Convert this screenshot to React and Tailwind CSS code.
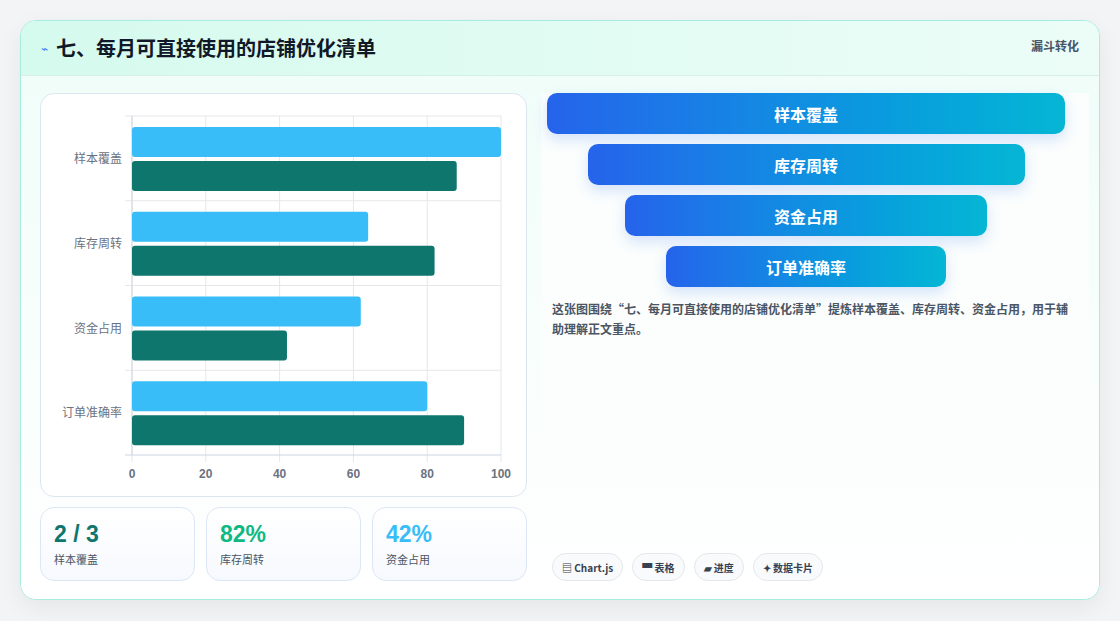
import React from "react";

const cats = [["样本覆盖",100,88],["库存周转",64,82],["资金占用",62,42],["订单准确率",80,90]];
const X0=131-40, W=369, Y0=115-93, BAND=84.75;

function Chart(){
  const xs=[0,20,40,60,80,100];
  return (
    <svg width="486" height="403" className="block" style={{fontFamily:"'Liberation Sans','Noto Sans CJK SC',sans-serif"}}>
      {xs.map(v=>{const x=X0+v/100*W;return <line key={v} x1={x} x2={x} y1={Y0} y2={Y0+339+7} stroke="#e5e7eb"/>})}
      {[0,1,2,3,4].map(i=><line key={i} x1={X0-7} x2={X0+W} y1={Y0+i*BAND} y2={Y0+i*BAND} stroke={i===4?"#cbd5e1":"#e5e7eb"}/>)}
      <line x1={X0} x2={X0} y1={Y0} y2={Y0+339} stroke="#d1d5db"/>
      {cats.map(([n,a,b],i)=>{const y=Y0+i*BAND;return <g key={n}>
        <rect x={X0} y={y+11} width={a/100*W} height={30} rx={3} fill="#38bdf8"/>
        <rect x={X0} y={y+45} width={b/100*W} height={30} rx={3} fill="#0f766e"/>
        <text x={X0-10} y={y+47} textAnchor="end" fontSize="12" fill="#6b7280">{n}</text>
      </g>})}
      {xs.map(v=><text key={v} x={X0+v/100*W} y={Y0+339+23} textAnchor="middle" fontSize="12" fontWeight="bold" fill="#6b7280">{v}</text>)}
    </svg>
  );
}

const funnel=[["样本覆盖",518],["库存周转",437],["资金占用",362],["订单准确率",280]];

export default function App(){
  return (
    <div className="w-[1120px] h-[621px] bg-[#f3f4f6] pt-[20px] pl-[20px]" style={{fontFamily:"'Noto Sans CJK SC','Noto Sans',sans-serif"}}>
      <div className="w-[1080px] h-[580px] rounded-[16px] border border-[#a7ece0] bg-white overflow-hidden shadow-[0_8px_24px_rgba(0,0,0,0.06)] flex flex-col">
        <div className="h-[55px] shrink-0 flex items-center justify-between px-[20px] bg-gradient-to-r from-[#d5faee] to-[#ecfdf7] border-b border-[#d7efe9]">
          <div className="flex items-center gap-[8px]">
            <span className="text-[#3b82f6] text-[12px]">⌁</span>
            <span className="text-[20px] font-bold text-[#111827]">七、每月可直接使用的店铺优化清单</span>
          </div>
          <span className="text-[12px] font-bold text-[#475569] self-start mt-[16px] mr-[0px]">漏斗转化</span>
        </div>
        <div className="flex-1 flex gap-[14px] pl-[19px] pr-[10px] pt-[17px] pb-[18px] bg-gradient-to-b from-[#f0fdf9] to-white">
          <div className="w-[487px] flex flex-col gap-[10px]">
            <div className="h-[404px] rounded-[14px] border border-[#dbe7f0] bg-white overflow-hidden"><Chart/></div>
            <div className="flex gap-[11px]">
              {[["2 / 3","样本覆盖","#0f766e"],["82%","库存周转","#10b981"],["42%","资金占用","#38bdf8"]].map(([v,l,c])=>(
                <div key={l} className="w-[155px] h-[74px] rounded-[14px] border border-[#dbe7f5] bg-gradient-to-b from-white to-[#f6f9fe] px-[13px] pt-[12px]">
                  <div className="text-[23px] font-bold leading-[28px]" style={{color:c,fontFamily:"'Liberation Sans',sans-serif"}}>{v}</div>
                  <div className="text-[11px] text-[#4b5563] mt-[3px]">{l}</div>
                </div>
              ))}
            </div>
          </div>
          <div className="flex-1 flex flex-col">
            <div className="h-[387px] bg-[#fbfefd] flex flex-col">
              <div className="flex flex-col items-center gap-[10px] pr-[18px]">
                {funnel.map(([t,w])=>(
                  <div key={t} style={{width:w}} className="h-[41px] rounded-[10px] bg-gradient-to-r from-[#2563eb] to-[#06b6d4] flex items-center justify-center text-white text-[16px] font-bold shadow-[0_6px_14px_rgba(37,99,235,0.18)]">{t}</div>
                ))}
              </div>
              <p className="mt-[12px] px-[11px] text-[12px] font-bold leading-[20px] text-[#4b5563]">这张图围绕“七、每月可直接使用的店铺优化清单”提炼样本覆盖、库存周转、资金占用，用于辅助理解正文重点。</p>
            </div>
            <div className="mt-auto flex gap-[9px] pl-[11px] pb-[0px]">
              {["▤ Chart.js","▀ 表格","▰ 进度","✦ 数据卡片"].map(t=>(
                <span key={t} className="h-[28px] px-[9px] rounded-full border border-[#e5e7eb] bg-[#f8fafc] text-[10px] font-bold text-[#374151] flex items-center">{t}</span>
              ))}
            </div>
          </div>
        </div>
      </div>
    </div>
  );
}
